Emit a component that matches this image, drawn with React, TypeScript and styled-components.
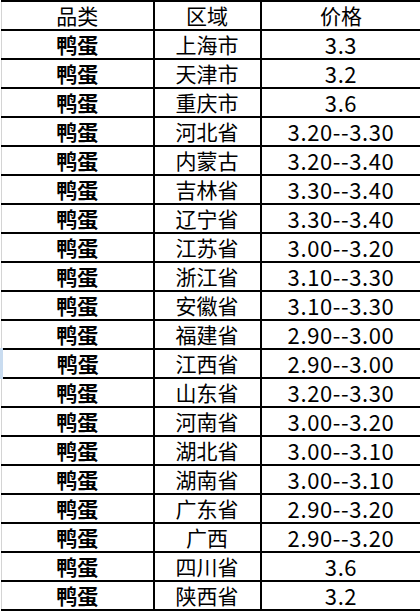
import { FC } from 'react';
import styled, { createGlobalStyle } from 'styled-components';

const GlobalStyle = createGlobalStyle`
    html, body {
        margin: 0;
        padding: 0;
        background: #fff;
    }
    body {
        font-family: "Noto Sans CJK SC", "Noto Sans", sans-serif;
        color: #000;
    }
`;

const Sheet = styled.table`
    border-collapse: collapse;
    table-layout: fixed;
    width: 420px;
    margin: 0;
`;

const Cell = styled.td<{ $bold?: boolean; $first?: boolean; $marked?: boolean; $num?: boolean }>`
    height: 27px;
    padding: 0;
    text-align: center;
    vertical-align: middle;
    font-size: ${p => (p.$num ? '22px' : '21px')};
    letter-spacing: ${p => (p.$num ? '0.6px' : '0')};
    line-height: 27px;
    font-weight: ${p => (p.$bold ? 700 : 400)};
    border: 2px solid #000;
    border-left: ${p => (p.$first ? (p.$marked ? '3px solid #c9dcf0' : '1px solid #d4d4d4') : '2px solid #000')};
    white-space: nowrap;
`;

const Head = styled(Cell).attrs({ as: 'th' })``;

const rows: [string, string][] = [
    ['上海市', '3.3'],
    ['天津市', '3.2'],
    ['重庆市', '3.6'],
    ['河北省', '3.20--3.30'],
    ['内蒙古', '3.20--3.40'],
    ['吉林省', '3.30--3.40'],
    ['辽宁省', '3.30--3.40'],
    ['江苏省', '3.00--3.20'],
    ['浙江省', '3.10--3.30'],
    ['安徽省', '3.10--3.30'],
    ['福建省', '2.90--3.00'],
    ['江西省', '2.90--3.00'],
    ['山东省', '3.20--3.30'],
    ['河南省', '3.00--3.20'],
    ['湖北省', '3.00--3.10'],
    ['湖南省', '3.00--3.10'],
    ['广东省', '2.90--3.20'],
    ['广西', '2.90--3.20'],
    ['四川省', '3.6'],
    ['陕西省', '3.2'],
];

const App: FC = () => {
    return (
        <>
            <GlobalStyle />
            <Sheet>
                <colgroup>
                    <col style={{ width: 152 }} />
                    <col style={{ width: 107 }} />
                    <col style={{ width: 161 }} />
                </colgroup>
                <thead>
                    <tr>
                        <Head $first>品类</Head>
                        <Head>区域</Head>
                        <Head>价格</Head>
                    </tr>
                </thead>
                <tbody>
                    {rows.map(([area, price]) => (
                        <tr key={area}>
                            <Cell $first $bold $marked={area === '江西省'}>鸭蛋</Cell>
                            <Cell>{area}</Cell>
                            <Cell $num>{price}</Cell>
                        </tr>
                    ))}
                </tbody>
            </Sheet>
        </>
    );
};

export default App;
